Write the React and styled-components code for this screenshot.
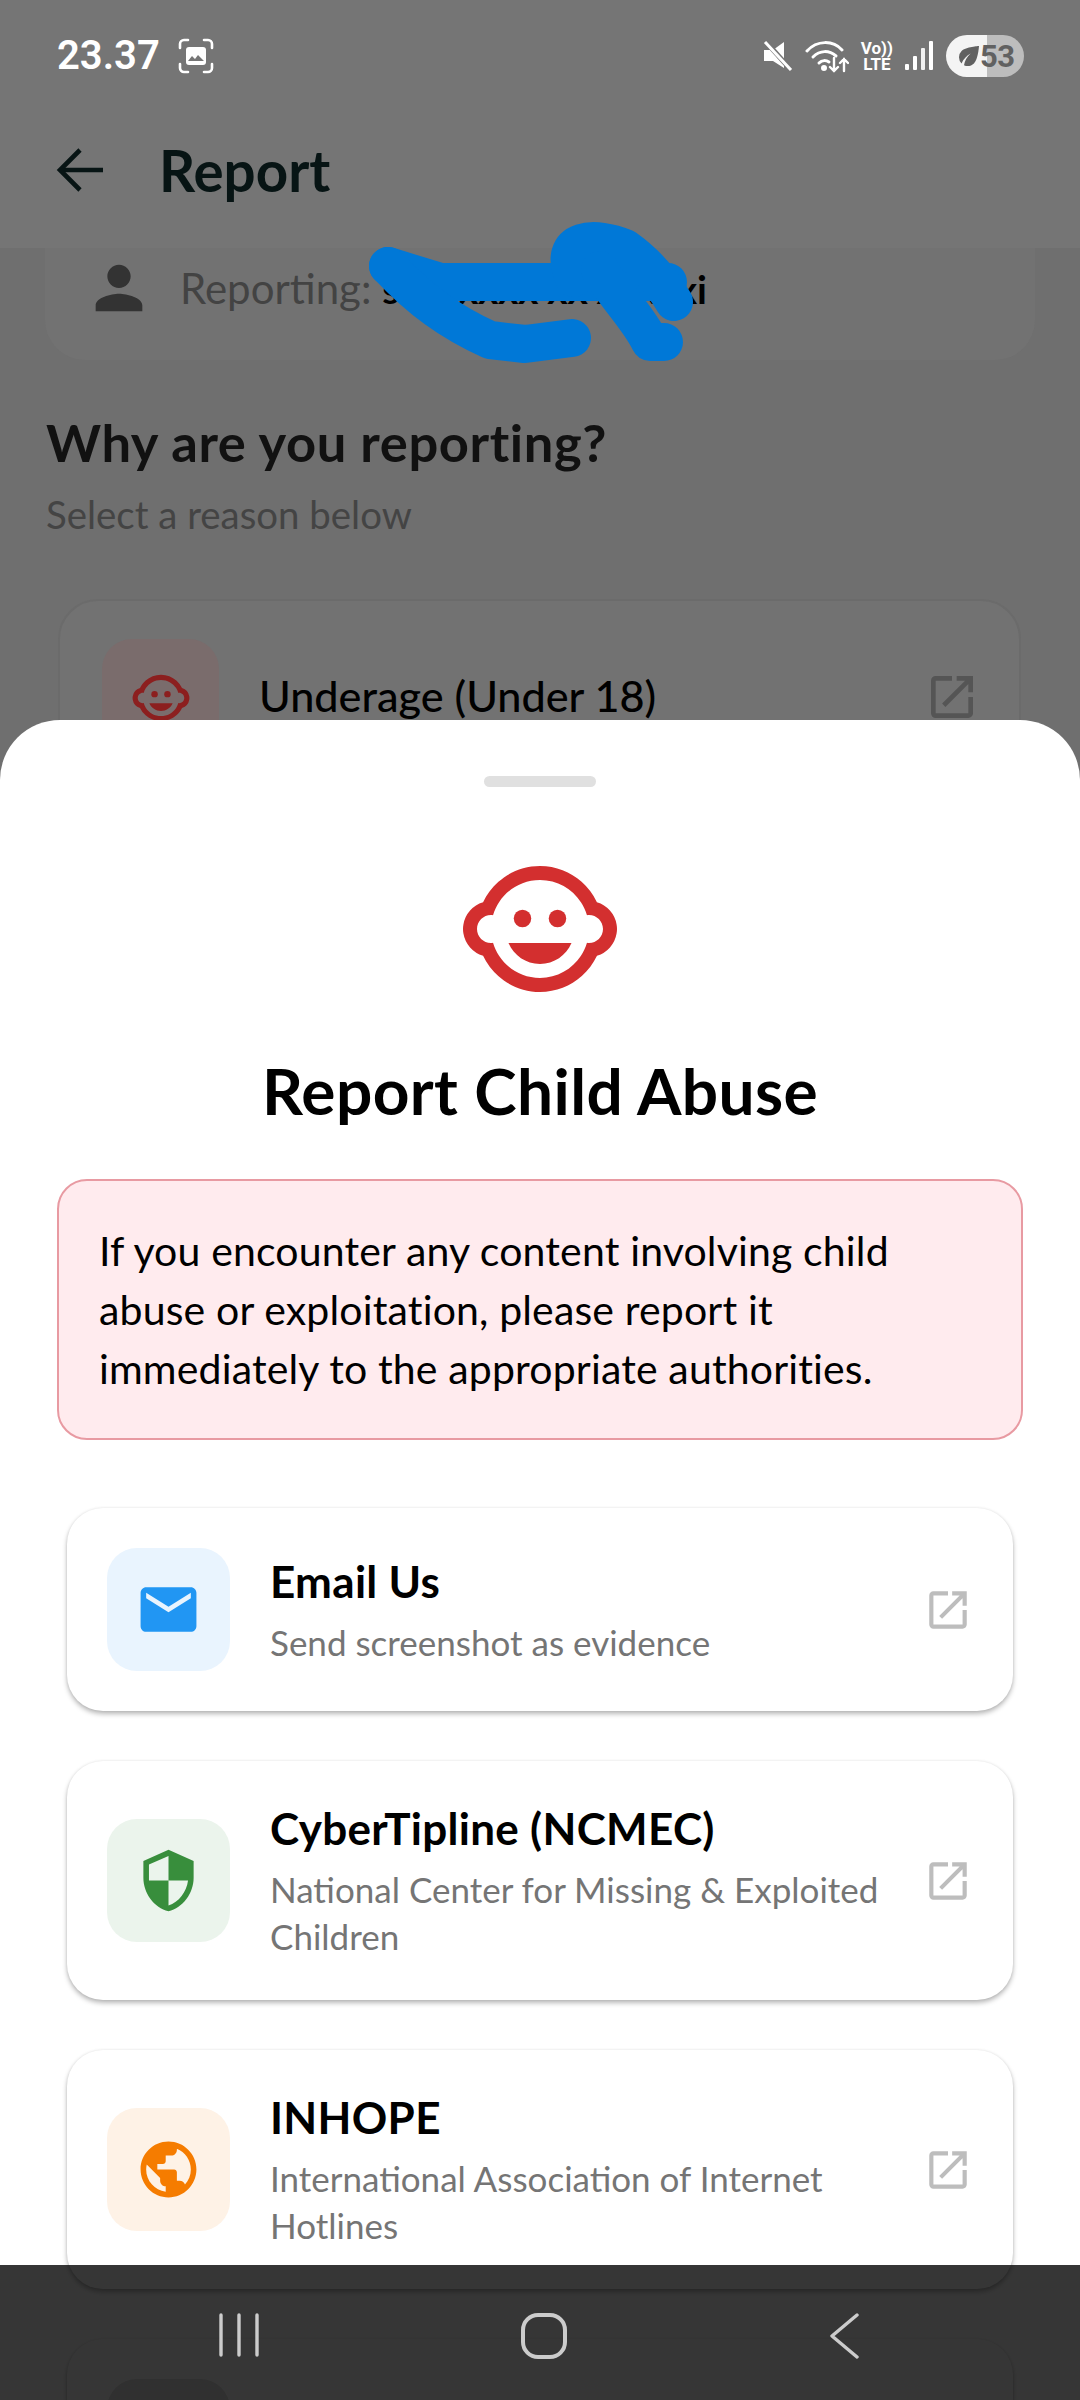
import React from 'react';
import styled, { createGlobalStyle } from 'styled-components';
import { MdPerson, MdChildCare, MdOpenInNew, MdEmail, MdSecurity, MdPublic, MdEco } from 'react-icons/md';

const Global = createGlobalStyle`
  html, body { margin: 0; padding: 0; background: #757575; }
  * { box-sizing: border-box; }
`;

const Screen = styled.div`
  position: relative;
  width: 1080px;
  height: 2400px;
  overflow: hidden;
  background: #6f6f6f;
  font-family: Lato, "Noto Sans", sans-serif;
`;

const Top = styled.div`
  background: #757575;
  height: 248px;
`;

const StatusBar = styled.div`
  display: flex;
  align-items: center;
  justify-content: space-between;
  padding: 35px 56px 0 57px;
`;

const StatusLeft = styled.div`
  display: flex;
  align-items: center;
  gap: 18px;
`;

const StatusRight = styled.div`
  display: flex;
  align-items: center;
  gap: 12px;
`;

const Time = styled.span`
  font-family: Roboto, sans-serif;
  font-weight: 600;
  font-size: 40px;
  line-height: 42px;
  color: #fff;
`;

const Network = styled.div`
  display: flex;
  flex-direction: column;
  align-items: center;
  font-family: Roboto, sans-serif;
  font-weight: 700;
  font-size: 17px;
  line-height: 16px;
  color: #fff;
`;

const Battery = styled.div`
  display: flex;
  align-items: center;
  width: 78px;
  height: 42px;
  margin-left: 1px;
  padding-left: 8px;
  border-radius: 21px;
  background: linear-gradient(90deg, #f4f4f4 0 41px, #bdbdbd 41px);
  color: #616161;
  font-family: Roboto, sans-serif;
  font-weight: 700;
  font-size: 31px;
  letter-spacing: -0.5px;

  svg {
    margin-right: -4px;
    flex: none;
  }
`;

const AppBar = styled.div`
  display: flex;
  align-items: center;
  gap: 55px;
  height: 171px;
  padding: 14px 0 0 56px;
  color: #071414;
`;

const AppTitle = styled.h1`
  margin: 0;
  font-size: 56.5px;
  font-weight: 700;
`;

const Body = styled.div`
  padding: 0 45px;
`;

const ReportingCard = styled.div`
  display: flex;
  align-items: center;
  gap: 26px;
  height: 112px;
  padding: 0 0 32px 39px;
  border-radius: 0 0 40px 40px;
  background: #727272;
  color: #333;
  font-size: 42px;
`;

const ReportingText = styled.span`
  color: #434343;
`;

const Name = styled.b`
  color: #000;
  font-weight: 700;
  font-size: 39px;
  letter-spacing: -0.3px;
`;

const Heading = styled.h2`
  margin: 52px 0 0 1px;
  font-size: 52.5px;
  line-height: 60px;
  font-weight: 700;
  color: #111;
  letter-spacing: 0.6px;
`;

const Hint = styled.p`
  margin: 19px 0 0 1px;
  font-size: 38.4px;
  line-height: 46px;
  color: #444;
`;

const ReasonCard = styled.div`
  display: flex;
  align-items: flex-start;
  gap: 40px;
  height: 200px;
  margin: 62px 14px 0 13px;
  padding: 38px 39px 38px 42px;
  border: 2px solid #6b6b6b;
  border-radius: 40px;
  background: #727272;
`;

const ReasonBox = styled.div`
  display: flex;
  align-items: center;
  justify-content: center;
  flex: none;
  width: 117px;
  height: 117px;
  border-radius: 30px;
  background: #7a6c6c;
  color: #8c1f1f;
`;

const ReasonLabel = styled.span`
  flex: 1;
  margin-top: 30px;
  font-size: 43.2px;
  font-weight: 500;
  color: #000;
`;

const ReasonArrow = styled.span`
  display: flex;
  margin-top: 30px;
  color: #555;
`;

const Scribble = styled.svg`
  position: absolute;
  left: 0;
  top: 0;
`;

const Sheet = styled.div`
  position: absolute;
  left: 0;
  right: 0;
  top: 720px;
  bottom: 0;
  padding-top: 56px;
  border-radius: 60px 60px 0 0;
  background: #fff;
`;

const Handle = styled.div`
  width: 112px;
  height: 11px;
  margin: 0 auto;
  border-radius: 6px;
  background: #e0e0e0;
`;

const SheetIcon = styled.div`
  display: flex;
  justify-content: center;
  margin-top: 58px;
  color: #d32f2f;
`;

const SheetTitle = styled.h2`
  margin: 40px 0 0;
  text-align: center;
  font-size: 64px;
  line-height: 76px;
  font-weight: 700;
  letter-spacing: 0.4px;
  color: #000;
`;

const Alert = styled.div`
  margin: 50px 57px 0;
  padding: 40px 40px;
  border: 2px solid #e89aa2;
  border-radius: 30px;
  background: #ffebee;
  font-size: 41px;
  line-height: 59px;
  letter-spacing: 0.15px;
  color: #000;
`;

const Options = styled.div`
  display: flex;
  flex-direction: column;
  gap: 50px;
  margin: 68px 67px 0;
`;

const Option = styled.div`
  display: flex;
  align-items: center;
  gap: 40px;
  min-height: 203px;
  padding: 40px;
  border-radius: 36px;
  background: #fff;
  box-shadow: 0 3px 5px rgba(0, 0, 0, 0.28), 0 0 3px rgba(0, 0, 0, 0.08);
`;

const OptionBox = styled.div`
  display: flex;
  align-items: center;
  justify-content: center;
  flex: none;
  width: 123px;
  height: 123px;
  border-radius: 30px;
  background: ${(p) => p.$bg};
  color: ${(p) => p.$color};
`;

const OptionText = styled.div`
  flex: 1;
  min-width: 0;
`;

const OptionTitle = styled.div`
  font-size: 44px;
  line-height: 55px;
  font-weight: 700;
  letter-spacing: 0.3px;
  color: #000;
`;

const OptionSub = styled.div`
  margin-top: 10px;
  font-size: 35px;
  line-height: 47px;
  color: #757575;
`;

const OptionArrow = styled.span`
  display: flex;
  flex: none;
  color: #bdbdbd;
`;

const NavBar = styled.div`
  position: absolute;
  left: 0;
  right: 0;
  bottom: 0;
  height: 135px;
  display: flex;
  align-items: flex-start;
  justify-content: space-between;
  padding: 48px 221px 0 219px;
  background: rgba(0, 0, 0, 0.79);
`;

function ScreenshotIcon() {
  return (
    <svg width="36" height="36" viewBox="0 0 36 36" fill="none">
      <path d="M2 10V6a4 4 0 0 1 4-4h4M26 2h4a4 4 0 0 1 4 4v4M34 26v4a4 4 0 0 1-4 4h-4M10 34H6a4 4 0 0 1-4-4v-4" stroke="#fff" strokeWidth="2.6" strokeLinecap="round" />
      <rect x="8" y="9" width="20" height="18" rx="3" fill="#fff" />
      <path d="M10 23l4-5 3 3 3-4 6 6z" fill="#757575" />
    </svg>
  );
}

function MuteIcon() {
  return (
    <svg width="30" height="30" viewBox="0 0 30 30">
      <path d="M21 1v26L10 20H1V9h9z" fill="#fff" />
      <path d="M4 2l24 27" stroke="#757575" strokeWidth="5" />
      <path d="M2 1l26 28" stroke="#fff" strokeWidth="3" />
    </svg>
  );
}

function WifiIcon() {
  return (
    <svg width="44" height="34" viewBox="0 0 44 34" fill="none" stroke="#fff" strokeWidth="3" strokeLinecap="round">
      <path d="M2 12C12 1 28 1 37 11" />
      <path d="M8 18c7-7 16-7 23-1" />
      <path d="M14 24c3-3 7-3 10-1" />
      <circle cx="19" cy="29" r="1.5" fill="#fff" />
      <path d="M29 19v13M25 28l4 4 4-4M39 32V20M35 24l4-4 4 4" strokeWidth="2.4" />
    </svg>
  );
}

function SignalIcon() {
  return (
    <svg width="28" height="30" viewBox="0 0 28 30" fill="#fff">
      <rect x="0" y="23" width="4" height="6" rx="1" />
      <rect x="8" y="15" width="4" height="14" rx="1" />
      <rect x="16" y="7" width="4" height="22" rx="1" opacity="0.9" />
      <rect x="24" y="0" width="4" height="29" rx="1" />
    </svg>
  );
}

function ArrowBack() {
  return (
    <svg width="48" height="46" viewBox="0 0 48 46" fill="none" stroke="#071414" strokeWidth="4.6">
      <path d="M47 23H4" />
      <path d="M24 3L4 23l20 20" />
    </svg>
  );
}

function RecentsIcon() {
  return (
    <svg width="40" height="44" viewBox="0 0 40 44" stroke="#ccc" strokeWidth="3.4" strokeLinecap="round">
      <path d="M2 2v40M20 2v40M38 2v40" />
    </svg>
  );
}

function HomeIcon() {
  return (
    <svg width="46" height="46" viewBox="0 0 46 46" fill="none">
      <rect x="2" y="2" width="42" height="42" rx="15" stroke="#ccc" strokeWidth="4" />
    </svg>
  );
}

function BackIcon() {
  return (
    <svg width="30" height="46" viewBox="0 0 30 46" fill="none">
      <path d="M28 2L3 23l25 21" stroke="#ccc" strokeWidth="3.4" strokeLinecap="round" strokeLinejoin="round" />
    </svg>
  );
}

const options = [
  {
    title: 'Email Us',
    sub: 'Send screenshot as evidence',
    Icon: MdEmail,
    bg: '#e9f4fe',
    color: '#2196f3',
  },
  {
    title: 'CyberTipline (NCMEC)',
    sub: 'National Center for Missing & Exploited Children',
    Icon: MdSecurity,
    bg: '#ebf4ec',
    color: '#388e3c',
  },
  {
    title: 'INHOPE',
    sub: 'International Association of Internet Hotlines',
    Icon: MdPublic,
    bg: '#fef2e6',
    color: '#f57c00',
  },
];

export default function App() {
  return (
    <Screen>
      <Global />
      <Top>
        <StatusBar>
          <StatusLeft>
            <Time>23.37</Time>
            <ScreenshotIcon />
          </StatusLeft>
          <StatusRight>
            <MuteIcon />
            <WifiIcon />
            <Network>
              <span>Vo))</span>
              <span>LTE</span>
            </Network>
            <SignalIcon />
            <Battery>
              <MdEco size={30} />
              53
            </Battery>
          </StatusRight>
        </StatusBar>
        <AppBar>
          <ArrowBack />
          <AppTitle>Report</AppTitle>
        </AppBar>
      </Top>
      <Body>
        <ReportingCard>
          <MdPerson size={70} />
          <ReportingText>
            Reporting: <Name>si xxxxxx xx xxxxxi</Name>
          </ReportingText>
        </ReportingCard>
        <Heading>Why are you reporting?</Heading>
        <Hint>Select a reason below</Hint>
        <ReasonCard>
          <ReasonBox>
            <MdChildCare size={62} />
          </ReasonBox>
          <ReasonLabel>Underage (Under 18)</ReasonLabel>
          <ReasonArrow>
            <MdOpenInNew size={56} />
          </ReasonArrow>
        </ReasonCard>
      </Body>
      <Scribble width="1080" height="400" fill="none" stroke="#0078d7" strokeWidth="38" strokeLinecap="round" strokeLinejoin="round">
        <path d="M388 266L440 282H668" />
        <path d="M388 266C420 300 450 322 490 340L525 344L572 338" />
        <path d="M574 278C556 236 596 236 625 248C645 262 662 282 674 302" />
        <path d="M600 270C615 295 640 320 650 342L664 342" />
      </Scribble>
      <Sheet>
        <Handle />
        <SheetIcon>
          <MdChildCare size={168} />
        </SheetIcon>
        <SheetTitle>Report Child Abuse</SheetTitle>
        <Alert>
          If you encounter any content involving child abuse or exploitation, please report it immediately to the appropriate authorities.
        </Alert>
        <Options>
          {options.map(({ title, sub, Icon, bg, color }) => (
            <Option key={title}>
              <OptionBox $bg={bg} $color={color}>
                <Icon size={67} />
              </OptionBox>
              <OptionText>
                <OptionTitle>{title}</OptionTitle>
                <OptionSub>{sub}</OptionSub>
              </OptionText>
              <OptionArrow>
                <MdOpenInNew size={50} />
              </OptionArrow>
            </Option>
          ))}
          <Option>
            <OptionBox $bg="#e0e0e0" $color="#757575" />
          </Option>
        </Options>
      </Sheet>
      <NavBar>
        <RecentsIcon />
        <HomeIcon />
        <BackIcon />
      </NavBar>
    </Screen>
  );
}
